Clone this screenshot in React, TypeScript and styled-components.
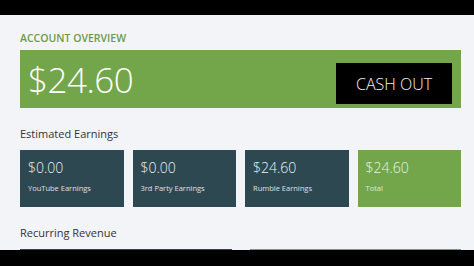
import * as React from 'react';
import styled, { createGlobalStyle } from 'styled-components';

const GlobalStyle = createGlobalStyle`
  html, body {
    margin: 0;
    padding: 0;
    background: #000;
  }
  body {
    font-family: "Open Sans", "Liberation Sans", sans-serif;
  }
`;

const earnings = [
  { value: '$0.00', label: 'YouTube Earnings', total: false },
  { value: '$0.00', label: '3rd Party Earnings', total: false },
  { value: '$24.60', label: 'Rumble Earnings', total: false },
  { value: '$24.60', label: 'Total', total: true },
];

function App() {
  return (
    <Frame>
      <GlobalStyle />
      <Letterbox $height={15} />
      <Page>
        <SectionTitle>Account Overview</SectionTitle>
        <Banner>
          <Balance>$24.60</Balance>
          <CashOut>CASH OUT</CashOut>
        </Banner>

        <Heading>Estimated Earnings</Heading>
        <CardRow>
          {earnings.map((e) => (
            <Card key={e.label} $total={e.total}>
              <CardValue>{e.value}</CardValue>
              <CardLabel>{e.label}</CardLabel>
            </Card>
          ))}
        </CardRow>

        <Heading>Recurring Revenue</Heading>
        <RevenueRow>
          <RevenueCard />
          <RevenueCard $green />
        </RevenueRow>
      </Page>
      <Letterbox $height={16} />
    </Frame>
  );
}

const Frame = styled.div`
  width: 474px;
  height: 266px;
  display: flex;
  flex-direction: column;
  background: #000;
  overflow: hidden;
`;

const Letterbox = styled.div<{ $height: number }>`
  height: ${(p) => p.$height}px;
  flex-shrink: 0;
  background: #000;
`;

const Page = styled.div`
  height: 235px;
  flex-shrink: 0;
  overflow: hidden;
  background: #f3f4f8;
  padding: 16px 13px 0 20px;
  box-sizing: border-box;
`;

const SectionTitle = styled.div`
  font-size: 10.5px;
  line-height: 14px;
  font-weight: 600;
  text-transform: uppercase;
  color: #6b9b47;
  margin-bottom: 5px;
`;

const Banner = styled.div`
  height: 58px;
  background: #73a64b;
  display: flex;
  align-items: flex-end;
  justify-content: space-between;
  padding: 0 9px 4px 8px;
  box-sizing: border-box;
`;

const Balance = styled.div`
  font-size: 35px;
  font-weight: 300;
  line-height: 48px;
  color: #fff;
  letter-spacing: -0.5px;
`;

const CashOut = styled.button`
  width: 116px;
  height: 41px;
  background: #000;
  color: #f2f2f2;
  border: none;
  font-family: inherit;
  font-size: 16px;
  font-weight: 300;
  padding: 0;
`;

const Heading = styled.div`
  font-size: 11px;
  line-height: 14px;
  font-weight: 500;
  color: #333;
  margin: 19px 0 9px;
`;

const CardRow = styled.div`
  display: grid;
  grid-template-columns: repeat(4, 1fr);
  gap: 9px;
`;

const Card = styled.div<{ $total: boolean }>`
  height: 57px;
  background: ${(p) => (p.$total ? '#73a64b' : '#2e4851')};
  color: ${(p) => (p.$total ? '#e9f2e2' : '#eef2f3')};
  padding: 9px 8px 0;
  box-sizing: border-box;
`;

const CardValue = styled.div`
  font-size: 14px;
  font-weight: 300;
  line-height: 18px;
`;

const CardLabel = styled.div`
  font-size: 7.5px;
  line-height: 10px;
  margin-top: 6px;
  opacity: 0.9;
`;

const RevenueRow = styled.div`
  display: grid;
  grid-template-columns: 1fr 1fr;
  gap: 18px;
`;

const RevenueCard = styled.div<{ $green?: boolean }>`
  height: 60px;
  background: ${(p) => (p.$green ? '#73a64b' : '#2e4851')};
`;

export default App;
